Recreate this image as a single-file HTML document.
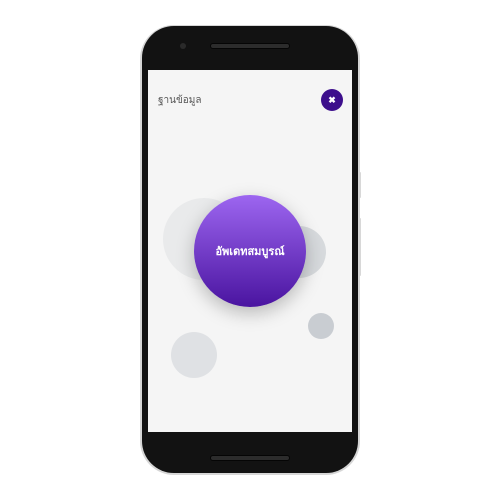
<!DOCTYPE html>
<html><head><meta charset="utf-8"><style>
body{margin:0;width:500px;height:500px;background:#fff;position:relative;overflow:hidden;font-family:"Liberation Sans","Noto Sans CJK SC",sans-serif}
.ab{position:absolute}
</style></head><body>
<div class="ab" style="left:358px;top:172px;width:3px;height:26px;background:#d8d8d8;border-radius:1px"></div>
<div class="ab" style="left:358px;top:218px;width:3px;height:58px;background:#d8d8d8;border-radius:1px"></div>
<div class="ab" style="left:140px;top:25px;width:220px;height:450px;background:#d6d6d6;border-radius:34px"></div>
<div class="ab" style="left:142px;top:26px;width:216px;height:447px;background:#121212;border-radius:32px"></div>
<div class="ab" style="left:180px;top:43px;width:6px;height:6px;background:#2a2a2a;border-radius:50%"></div>
<div class="ab" style="left:210px;top:43px;width:80px;height:6px;background:#2c2c2c;border:1px solid #050505;border-radius:4px;box-sizing:border-box"></div>
<div class="ab" style="left:210px;top:455px;width:80px;height:6px;background:#2c2c2c;border:1px solid #050505;border-radius:4px;box-sizing:border-box"></div>
<div class="ab" style="left:148px;top:70px;width:204px;height:362px;background:#f5f5f5;overflow:hidden">
  <div class="ab" style="left:15px;top:128px;width:82px;height:82px;border-radius:50%;background:#e9eaeb"></div>
  <div class="ab" style="left:124px;top:156px;width:54px;height:52px;border-radius:50%;background:#d7dadd"></div>
  <div class="ab" style="left:160px;top:243px;width:26px;height:26px;border-radius:50%;background:#c9cdd2"></div>
  <div class="ab" style="left:23px;top:262px;width:46px;height:46px;border-radius:50%;background:#dfe1e4"></div>
  <div class="ab" style="left:46px;top:125px;width:112px;height:112px;border-radius:50%;background:linear-gradient(#9d66f0,#4a14a0);box-shadow:0 6px 18px rgba(0,0,0,.25);color:#fff;font-size:11px;font-weight:bold;display:flex;align-items:center;justify-content:center">อัพเดทสมบูรณ์</div>
  <div class="ab" style="left:10px;top:23px;font-size:10px;color:#555">ฐานข้อมูล</div>
  <div class="ab" style="left:173px;top:19px;width:22px;height:22px;border-radius:50%;background:#3d0f8c;color:#fff;font-size:9px;font-weight:bold;display:flex;align-items:center;justify-content:center">✖</div>
</div>
</body></html>
